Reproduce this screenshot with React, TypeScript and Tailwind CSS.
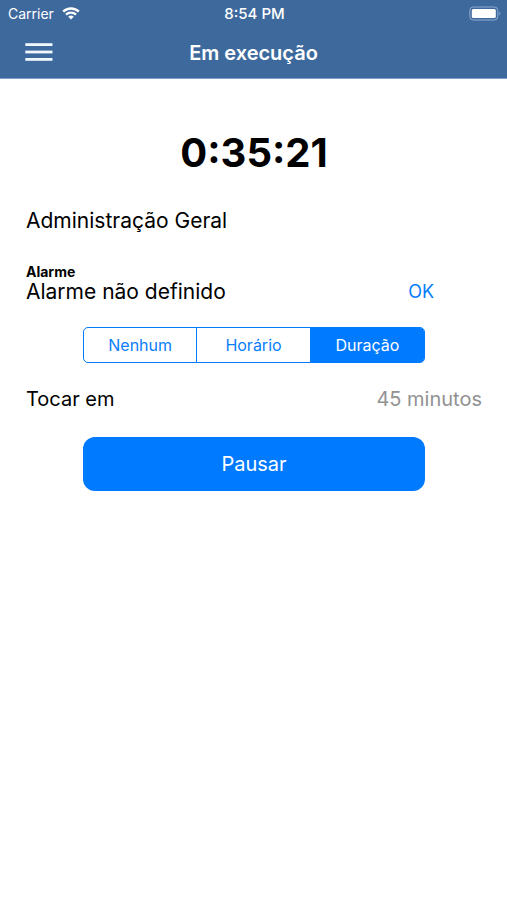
import { useState } from "react";

type AlarmMode = "none" | "time" | "duration";

const MODES: { id: AlarmMode; label: string }[] = [
  { id: "none", label: "Nenhum" },
  { id: "time", label: "Horário" },
  { id: "duration", label: "Duração" },
];

export default function App() {
  const [mode, setMode] = useState<AlarmMode>("duration");
  const [paused, setPaused] = useState(false);

  return (
    <div className="min-h-screen bg-white font-['Inter','Liberation_Sans',sans-serif] text-[21px] text-black">
      <header className="border-b border-[#7f9fcb] bg-[#3e699d] text-white">
        <StatusBar />
        <div className="grid h-[51px] grid-cols-[1fr_auto_1fr] items-center px-6">
          <button type="button" aria-label="Menu" className="justify-self-start">
            <MenuIcon />
          </button>
          <h1 className="text-xl font-semibold">Em execução</h1>
        </div>
      </header>

      <main className="pt-[50px] pr-[25px] pl-[26px]">
        <p className="text-center text-[40px] leading-12 font-bold">0:35:21</p>
        <p className="mt-[30px] leading-7">Administração Geral</p>

        <section className="mt-[30px]">
          <h2 className="text-sm leading-[14px] font-bold">Alarme</h2>
          <div className="flex items-center justify-between pr-12 leading-[26px]">
            <p>Alarme não definido</p>
            <button type="button" className="text-lg leading-[26px] text-[#087efb]">
              OK
            </button>
          </div>
        </section>

        <div className="mx-auto mt-[22px] w-3/4">
          <ModePicker value={mode} onChange={setMode} />
        </div>

        <div className="mt-[22px] flex items-center justify-between text-xl leading-7">
          <span id="ring-label">Tocar em</span>
          <button
            type="button"
            aria-labelledby="ring-label ring-value"
            className="text-[#929292]"
          >
            <span id="ring-value">45 minutos</span>
          </button>
        </div>

        <button
          type="button"
          onClick={() => setPaused((p) => !p)}
          className="mx-auto mt-6 block h-[54px] w-3/4 rounded-xl bg-[#007aff] text-xl text-white"
        >
          {paused ? "Continuar" : "Pausar"}
        </button>
      </main>
    </div>
  );
}

function StatusBar() {
  return (
    <div className="grid h-[27px] grid-cols-[1fr_auto_1fr] items-center pr-1.5 pl-2 text-sm">
      <div className="flex items-center gap-2">
        <span>Carrier</span>
        <WifiIcon />
      </div>
      <span className="text-[15px] font-medium">8:54 PM</span>
      <div className="justify-self-end">
        <BatteryIcon />
      </div>
    </div>
  );
}

function ModePicker({
  value,
  onChange,
}: {
  value: AlarmMode;
  onChange: (mode: AlarmMode) => void;
}) {
  return (
    <div
      role="radiogroup"
      aria-label="Alarme"
      className="grid h-9 grid-cols-3 divide-x divide-[#007aff] overflow-hidden rounded-[5px] border border-[#007aff] text-base"
    >
      {MODES.map((m) => (
        <label
          key={m.id}
          className="relative flex items-center justify-center text-[#087efb] has-checked:bg-[#007aff] has-checked:text-white"
        >
          <input
            type="radio"
            name="alarm-mode"
            checked={value === m.id}
            onChange={() => onChange(m.id)}
            className="sr-only"
          />
          {m.label}
        </label>
      ))}
    </div>
  );
}

function MenuIcon() {
  return (
    <svg width="30" height="22" viewBox="0 0 30 22" fill="#f1f7ff" aria-hidden="true">
      <rect x="1.3" y="1.2" width="27.2" height="2.8" />
      <rect x="1.3" y="8.6" width="27.2" height="2.8" />
      <rect x="1.3" y="16" width="27.2" height="2.8" />
    </svg>
  );
}

function WifiIcon() {
  return (
    <svg width="18" height="13" viewBox="0 0 18 13" fill="none" aria-hidden="true">
      <path d="M1.2 4.7a11 11 0 0 1 15.6 0" stroke="#fff" strokeWidth="2.5" />
      <path d="M4 7.6a7.1 7.1 0 0 1 10 0" stroke="#fff" strokeWidth="2.2" />
      <path d="M9 12.6 6.2 9.8a4 4 0 0 1 5.6 0Z" fill="#fff" />
    </svg>
  );
}

function BatteryIcon() {
  return (
    <svg width="32" height="15" viewBox="0 0 32 15" fill="none" aria-hidden="true">
      <rect x="0.8" y="1" width="28" height="13" rx="3.5" stroke="#8fabd0" />
      <rect x="2.8" y="3" width="24" height="9" rx="1.5" fill="#fff" />
      <path d="M30.3 5.5c1.4.6 1.4 3.4 0 4Z" fill="#8fabd0" />
    </svg>
  );
}
